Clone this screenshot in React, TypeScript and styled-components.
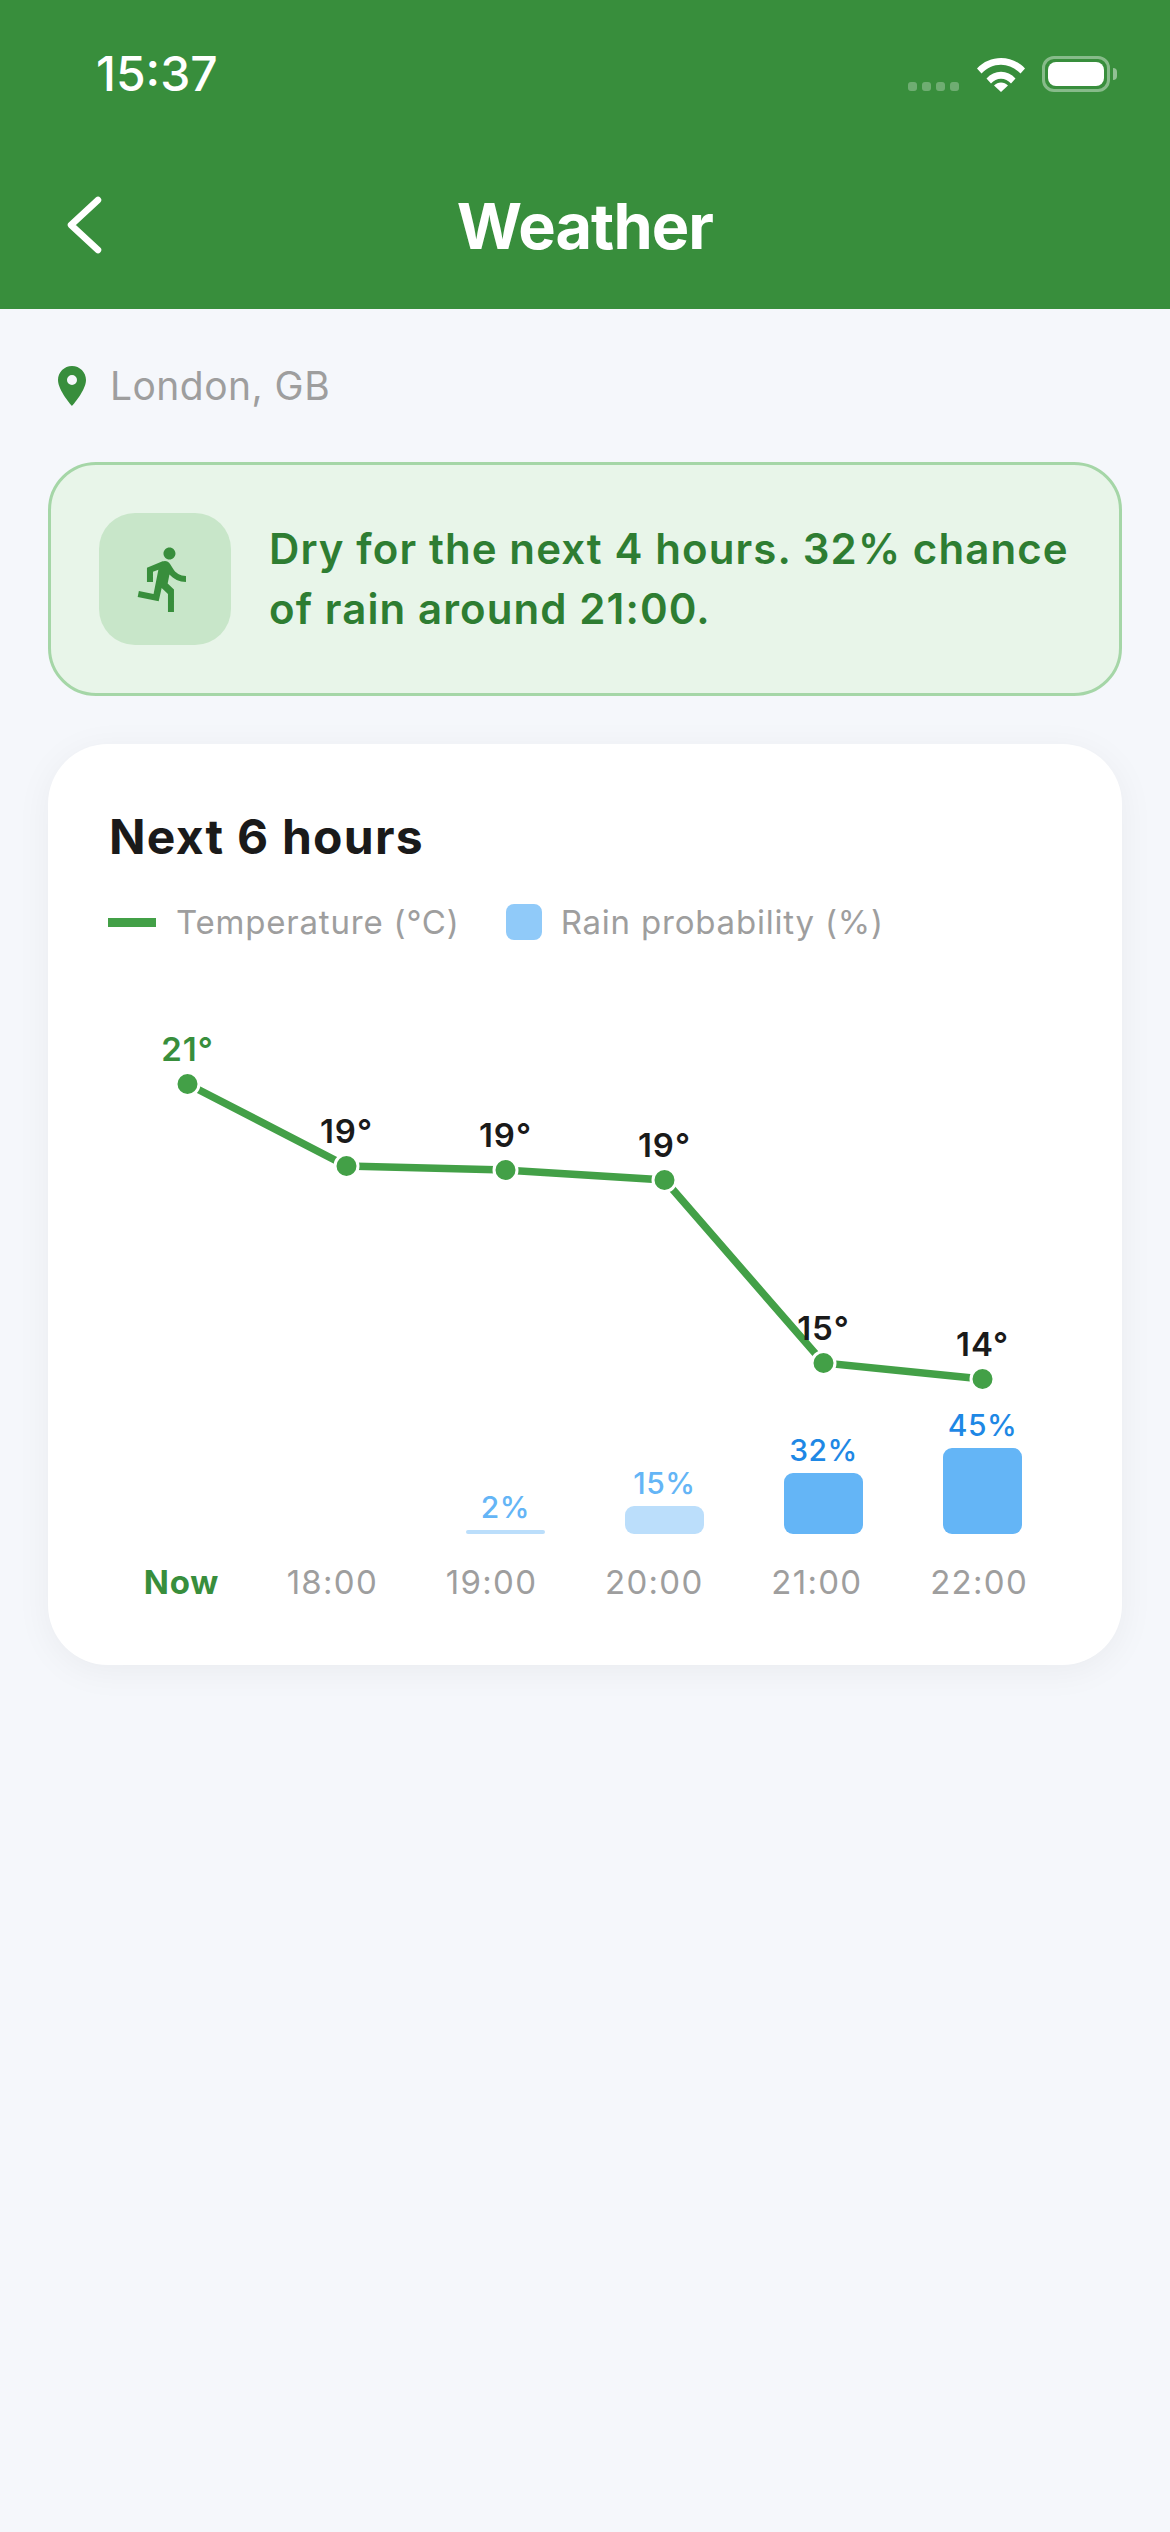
import React from 'react';
import styled, { createGlobalStyle } from 'styled-components';
import { MdDirectionsRun, MdLocationOn } from 'react-icons/md';

const Global = createGlobalStyle`
  html, body { margin: 0; padding: 0; background: #f5f7fb; }
  * { box-sizing: border-box; }
`;

const Page = styled.div`
  width: 1170px;
  min-height: 2532px;
  background: #f5f7fb;
  font-family: Inter, "Noto Sans", sans-serif;
  display: flex;
  flex-direction: column;
`;

const Header = styled.header`
  height: 309px;
  background: #388e3c;
  color: #fff;
  display: flex;
  flex-direction: column;
`;

const StatusBar = styled.div`
  height: 150px;
  padding: 46px 60px 0 96px;
  display: flex;
  justify-content: space-between;
  align-items: flex-start;
`;

const Time = styled.span`
  font-size: 48px;
  line-height: 56px;
  font-weight: 500;
`;

const StatusIcons = styled.div`
  display: flex;
  align-items: flex-start;
  padding-top: 10px;
`;

const SignalDots = styled.div`
  display: flex;
  gap: 5px;
  margin: 26px 18px 0 0;
`;

const SignalDot = styled.i`
  width: 9px;
  height: 9px;
  border-radius: 3px;
  background: rgba(255, 255, 255, 0.28);
`;

const Battery = styled.div`
  width: 68px;
  height: 36px;
  margin-left: 17px;
  padding: 3px;
  border: 3px solid rgba(255, 255, 255, 0.4);
  border-radius: 12px;
  position: relative;
  &::after {
    content: '';
    position: absolute;
    right: -10px;
    top: 9px;
    width: 4px;
    height: 12px;
    border-radius: 0 6px 6px 0;
    background: rgba(255, 255, 255, 0.45);
  }
`;

const BatteryFill = styled.div`
  height: 100%;
  background: #fff;
  border-radius: 8px;
`;

const NavBar = styled.div`
  height: 152px;
  padding: 0 48px;
  position: relative;
  display: flex;
  align-items: center;
  justify-content: center;
`;

const BackIcon = styled.svg`
  position: absolute;
  left: 60px;
  top: 43px;
`;

const Title = styled.h1`
  margin: 0;
  font-size: 63px;
  line-height: 76px;
  font-weight: 700;
  letter-spacing: -0.9px;
`;

const Content = styled.main`
  padding: 0 48px;
  display: flex;
  flex-direction: column;
`;

const Location = styled.div`
  height: 153px;
  padding-top: 53px;
  display: flex;
  align-items: flex-start;
  gap: 14px;
  color: #9e9e9e;
  font-size: 39px;
  line-height: 48px;
  letter-spacing: 0.45px;
  svg { color: #388e3c; flex: none; }
`;

const Banner = styled.section`
  height: 234px;
  border: 3px solid #a5d6a7;
  border-radius: 48px;
  background: #e8f5e9;
  padding: 0 24px 0 48px;
  display: flex;
  align-items: center;
  gap: 38px;
`;

const BannerIcon = styled.div`
  width: 132px;
  height: 132px;
  flex: none;
  border-radius: 36px;
  background: #c8e6c9;
  color: #388e3c;
  display: flex;
  align-items: center;
  justify-content: center;
`;

const BannerText = styled.p`
  margin: 0;
  color: #2e7d32;
  font-size: 42px;
  line-height: 60px;
  font-weight: 600;
  letter-spacing: 1.1px;
  white-space: nowrap;
`;

const Card = styled.section`
  margin-top: 48px;
  height: 921px;
  padding: 60px;
  background: #fff;
  border-radius: 60px;
  box-shadow: 0 6px 36px rgba(0, 0, 0, 0.05);
`;

const CardTitle = styled.h2`
  margin: 0 0 0 1px;
  color: #1a1a1a;
  font-size: 48px;
  line-height: 66px;
  font-weight: 700;
  letter-spacing: 1.25px;
`;

const Legend = styled.div`
  margin-top: 34px;
  display: flex;
  align-items: center;
  height: 36px;
  color: #9e9e9e;
  font-size: 33px;
  letter-spacing: 0.8px;
`;

const LegendLine = styled.i`
  width: 48px;
  height: 9px;
  background: #43a047;
  margin-right: 20px;
`;

const LegendSquare = styled.i`
  width: 36px;
  height: 36px;
  border-radius: 8px;
  background: #90caf9;
  margin: 0 19px 0 46px;
`;

const Chart = styled.div`
  position: relative;
  margin-top: 48px;
  height: 546px;
`;

const LineLayer = styled.svg`
  position: absolute;
  inset: 0;
  overflow: visible;
`;

const TempLabel = styled.text<{ $first?: boolean }>`
  font-size: 33px;
  font-weight: 600;
  letter-spacing: 1px;
  fill: ${(p) => (p.$first ? '#388e3c' : '#1a1a1a')};
  text-anchor: middle;
`;

const Bars = styled.div`
  height: 100%;
  display: grid;
  grid-template-columns: repeat(6, 159px);
  align-items: end;
`;

const BarColumn = styled.div`
  display: flex;
  flex-direction: column;
  align-items: center;
`;

const BarValue = styled.span<{ $strong: boolean }>`
  font-size: 30px;
  line-height: 36px;
  margin-bottom: 5px;
  font-weight: 500;
  letter-spacing: 0.5px;
  color: ${(p) => (p.$strong ? '#1e88e5' : '#64b5f6')};
`;

const Bar = styled.div<{ $strong: boolean; $thin: boolean }>`
  width: 79px;
  border-radius: ${(p) => (p.$thin ? '2px' : '9px')};
  background: ${(p) => (p.$strong ? '#64b5f6' : '#bbdefb')};
`;

const Hours = styled.div`
  margin-top: 28px;
  padding-left: 2px;
  display: flex;
  justify-content: space-around;
  line-height: 40px;
`;

const Hour = styled.span<{ $now?: boolean }>`
  font-size: 33px;
  letter-spacing: ${(p) => (p.$now ? '0.7px' : '1.3px')};
  font-weight: ${(p) => (p.$now ? 700 : 400)};
  color: ${(p) => (p.$now ? '#388e3c' : '#9e9e9e')};
`;

const points = [
  { x: 79.5, y: 96, t: '21°' },
  { x: 238.5, y: 178, t: '19°' },
  { x: 397.5, y: 182, t: '19°' },
  { x: 556.5, y: 192, t: '19°' },
  { x: 715.5, y: 375, t: '15°' },
  { x: 874.5, y: 391, t: '14°' },
];

const rain = [
  { v: 0, h: 0 },
  { v: 0, h: 0 },
  { v: 2, h: 4 },
  { v: 15, h: 28 },
  { v: 32, h: 61 },
  { v: 45, h: 86 },
];

const hours = ['Now', '18:00', '19:00', '20:00', '21:00', '22:00'];

export default function App() {
  return (
    <Page>
      <Global />
      <Header>
        <StatusBar>
          <Time>15:37</Time>
          <StatusIcons>
            <SignalDots>
              <SignalDot />
              <SignalDot />
              <SignalDot />
              <SignalDot />
            </SignalDots>
            <svg width="48" height="36" viewBox="0 0 48 36">
              <path d="M0 12.5C6.5 5.5 15 2 24 2s17.500 3.500 24 10.500l-4.500 5C38 12 31.500 8.800 24 8.800S10 12 4.500 17.500z" fill="#fff" />
              <path d="M9.500 22.500C13.500 18 18.500 15.800 24 15.800s10.500 2.200 14.500 6.700l-4.500 5C31.200 24.500 27.800 22.800 24 22.800s-7.200 1.700-10 4.700z" fill="#fff" />
              <path d="M17 29.500c2-2 4.300-3 7-3s5 1 7 3L24 36z" fill="#fff" />
            </svg>
            <Battery>
              <BatteryFill />
            </Battery>
          </StatusIcons>
        </StatusBar>
        <NavBar>
          <BackIcon width="44" height="64" viewBox="0 0 44 64">
            <path d="M38 7 L11 32 L38 57" fill="none" stroke="#fff" strokeWidth="6.500" strokeLinecap="round" strokeLinejoin="round" />
          </BackIcon>
          <Title>Weather</Title>
        </NavBar>
      </Header>
      <Content>
        <Location>
          <MdLocationOn size={48} />
          London, GB
        </Location>
        <Banner>
          <BannerIcon>
            <MdDirectionsRun size={72} />
          </BannerIcon>
          <BannerText>
            Dry for the next 4 hours. 32% chance
            <br />
            of rain around 21:00.
          </BannerText>
        </Banner>
        <Card>
          <CardTitle>Next 6 hours</CardTitle>
          <Legend>
            <LegendLine />
            Temperature (°C)
            <LegendSquare />
            Rain probability (%)
          </Legend>
          <Chart>
            <Bars>
              {rain.map((r, i) => (
                <BarColumn key={i}>
                  {r.v > 0 && <BarValue $strong={r.v > 30}>{r.v}%</BarValue>}
                  {r.v > 0 && <Bar $strong={r.v > 30} $thin={r.h < 8} style={{ height: r.h }} />}
                </BarColumn>
              ))}
            </Bars>
            <LineLayer width="954" height="546" viewBox="0 0 954 546">
              <polyline
                points={points.map((p) => `${p.x},${p.y}`).join(' ')}
                fill="none"
                stroke="#43a047"
                strokeWidth="7.500"
              />
              {points.map((p, i) => (
                <circle key={i} cx={p.x} cy={p.y} r="11.500" fill="#43a047" stroke="#fff" strokeWidth="3" />
              ))}
              {points.map((p, i) => (
                <TempLabel key={i} x={p.x} y={p.y - 23} $first={i === 0}>
                  {p.t}
                </TempLabel>
              ))}
            </LineLayer>
          </Chart>
          <Hours>
            {hours.map((h, i) => (
              <Hour key={h} $now={i === 0}>
                {h}
              </Hour>
            ))}
          </Hours>
        </Card>
      </Content>
    </Page>
  );
}
